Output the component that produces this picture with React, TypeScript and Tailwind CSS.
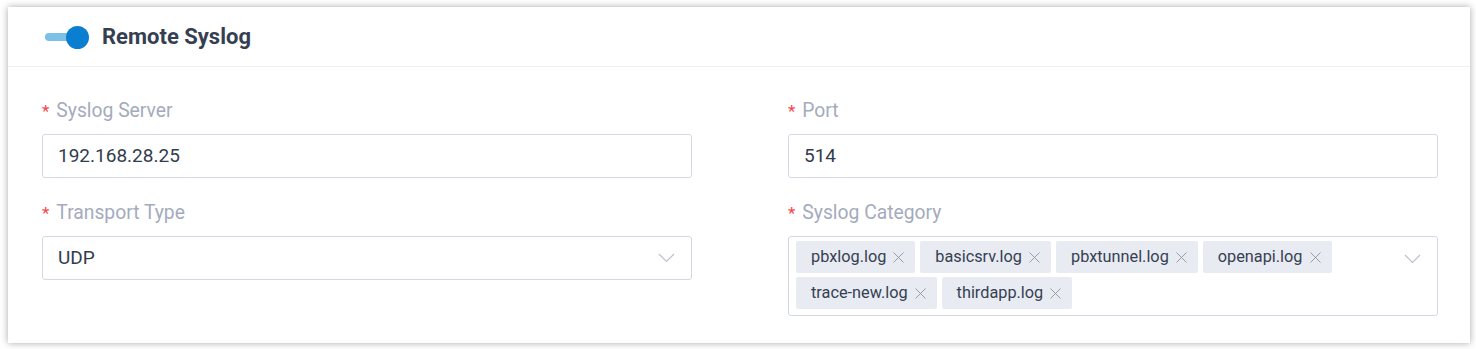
import { X } from "lucide-react";

const categories = ["pbxlog.log", "basicsrv.log", "pbxtunnel.log", "openapi.log", "trace-new.log", "thirdapp.log"];

const Chevron = ({ className = "" }: { className?: string }) => (
    <svg width="17" height="10" viewBox="0 0 17 10" className={className}>
        <polyline points="1,1 8.5,8.5 16,1" fill="none" stroke="#bcc0ca" strokeWidth="1.2" />
    </svg>
);

const Label = ({ text }: { text: string }) => (
    <div className="flex items-center h-6 mt-[1px] text-[19.3px] leading-6 text-[#a4abbd]">
        <span className="text-[#f5454d] mr-[7px] text-[17px]">*</span>
        {text}
    </div>
);

const TextInput = ({ value }: { value: string }) => (
    <div className="mt-[11px] h-11 border border-[#d5d8e3] rounded-[3px] flex items-center px-[15px] text-[19px] text-[#333c4d]">
        {value}
    </div>
);

const SelectBox = ({ value }: { value: string }) => (
    <div className="mt-[11px] h-11 border border-[#d5d8e3] rounded-[3px] flex items-center justify-between pl-[15px] pr-[16px] text-[19px] text-[#333c4d]">
        <span>{value}</span>
        <Chevron />
    </div>
);

export default function App() {
    return (
        <div className="w-[1476px] h-[349px] bg-white pl-[8px] pr-[6px] pt-[7px]" style={{ fontFamily: "Roboto, 'Liberation Sans', sans-serif" }}>
            <div className="w-[1462px] h-[336px] bg-white shadow-[0_0_7px_rgba(0,0,0,0.35)]">
                <div className="h-[60px] border-b border-[#f0f0f2] flex items-center pl-[37px]">
                    <div className="relative w-[44px] h-[22px] flex items-center">
                        <div className="w-[34px] h-[8px] rounded-full bg-[#7cbfe7]" />
                        <div className="absolute left-[21px] top-0 w-[23px] h-[23px] rounded-full bg-[#0a7fd1]" />
                    </div>
                    <span className="ml-[13px] text-[22px] font-bold text-[#363f52] leading-none">Remote Syslog</span>
                </div>
                <div className="grid grid-cols-2 gap-x-[96px] pl-[34px] pr-[32px] pt-[31px]">
                    <div>
                        <Label text="Syslog Server" />
                        <TextInput value="192.168.28.25" />
                    </div>
                    <div>
                        <Label text="Port" />
                        <TextInput value="514" />
                    </div>
                    <div className="mt-[22px]">
                        <Label text="Transport Type" />
                        <SelectBox value="UDP" />
                    </div>
                    <div className="mt-[22px]">
                        <Label text="Syslog Category" />
                        <div className="mt-[11px] border border-[#d5d8e3] rounded-[3px] flex items-start justify-between pl-[7px] pr-[16px] pt-[4px] pb-[6px]">
                            <div className="flex flex-wrap gap-x-[5px] gap-y-[4px] w-[560px]">
                                {categories.map((c) => (
                                    <div key={c} className="h-8 flex items-center bg-[#e8ebf2] rounded-[2px] pl-[15px] pr-[7px] text-[16.3px] text-[#363f52]">
                                        {c}
                                        <X size={19} strokeWidth={1.1} className="ml-[3px] text-[#8c919c]" />
                                    </div>
                                ))}
                            </div>
                            <Chevron className="mt-[13px]" />
                        </div>
                    </div>
                </div>
            </div>
        </div>
    );
}
